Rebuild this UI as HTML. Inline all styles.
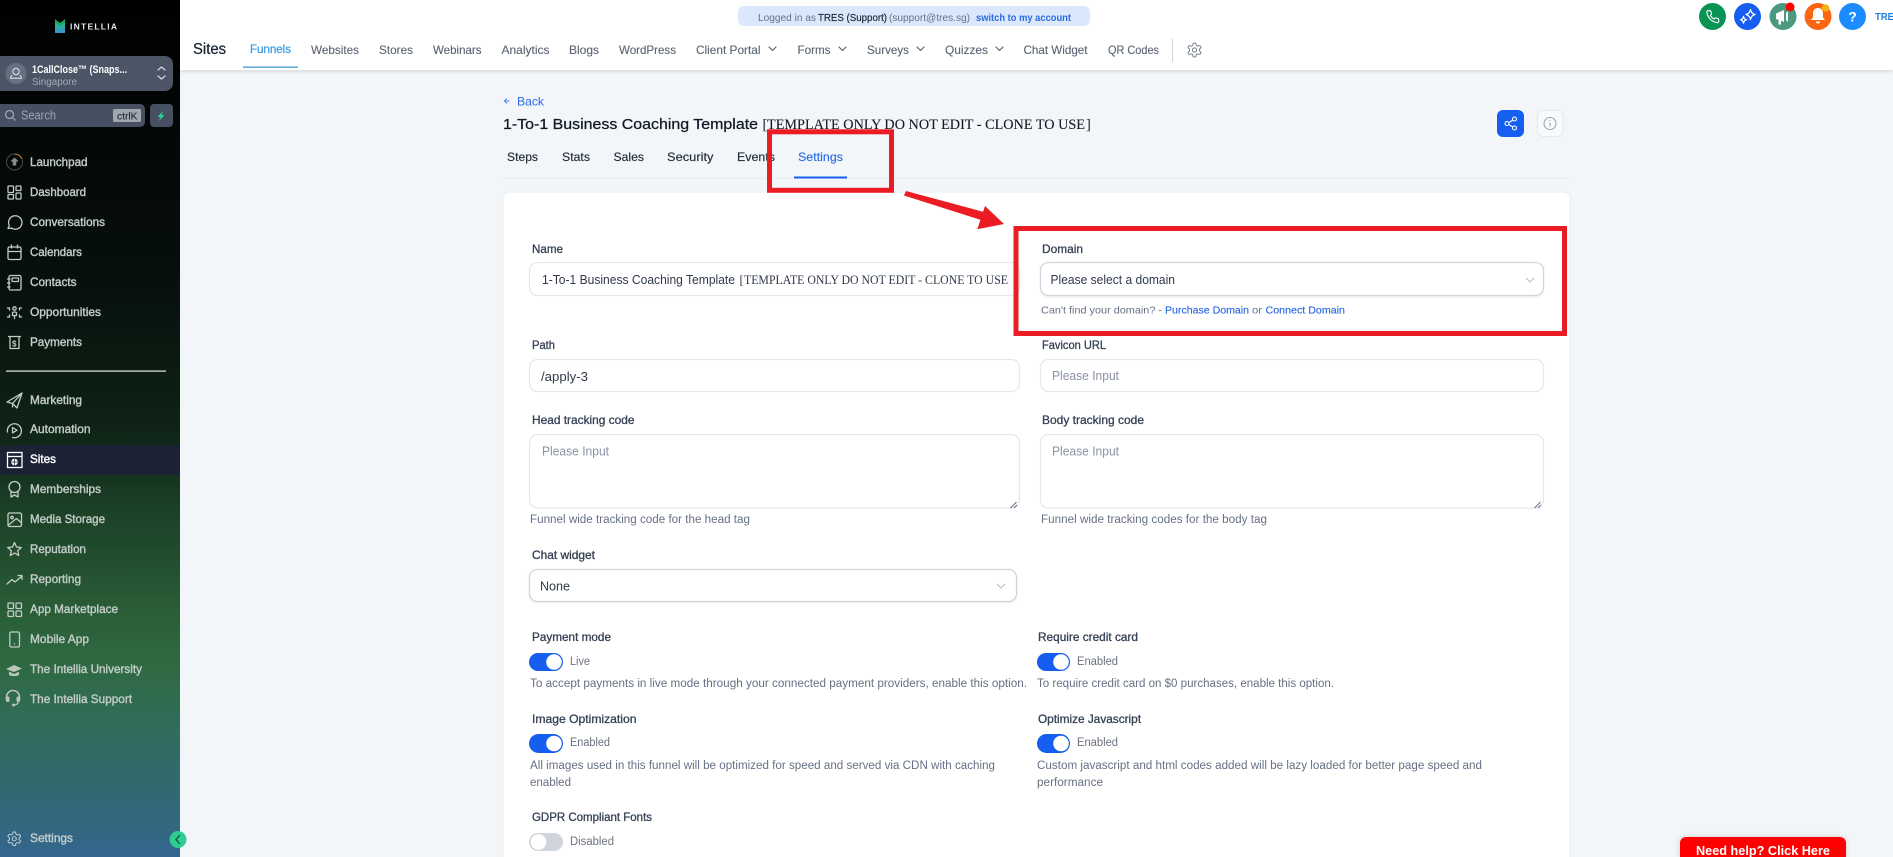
<!DOCTYPE html>
<html lang="en"><head><meta charset="utf-8"><title>Funnel Settings</title>
<style>
html,body{margin:0;padding:0;width:1893px;height:857px;overflow:hidden;background:#f2f6f9}
svg{display:block;font-family:"Liberation Sans",sans-serif}
text{white-space:pre}
.n{font-size:12px;fill:#c3ccc8;stroke:#c3ccc8;stroke-width:.4}
.t{font-size:12px;fill:#5a6472;stroke:#5a6472;stroke-width:.12}
.l{font-size:12px;fill:#344054;stroke:#344054;stroke-width:.3}
.d{font-size:11.5px;fill:#667085}
.p{font-size:12.5px;fill:#8a93a3}
.v{font-size:12.5px;fill:#2f3a4a}
.k{font-size:11.5px;fill:#6b7280}
.s{font-size:12px;fill:#1f2937;stroke:#1f2937;stroke-width:.15}
.i{fill:none;stroke:#c3ccc8;stroke-width:1.3;stroke-linecap:round;stroke-linejoin:round}
.b{fill:#fff;stroke:#e4e7ec;stroke-width:1.2}
.b2{fill:#fff;stroke:#d0d5dd;stroke-width:1.2;filter:drop-shadow(0 1px 1px rgba(16,24,40,.08))}
.c{fill:none;stroke:#b5bcc8;stroke-width:1}
.g{stroke:#667085;stroke-width:1;fill:none}
.serif{font-family:"Liberation Serif",serif}
</style></head><body>
<svg width="1893" height="857" viewBox="0 0 1893 857" xmlns="http://www.w3.org/2000/svg">
<defs>
<linearGradient id="sb" x1="0" y1="0" x2="0" y2="857" gradientUnits="userSpaceOnUse">
<stop offset="0" stop-color="#000"/><stop offset=".33" stop-color="#07100c"/><stop offset=".5" stop-color="#0e2316"/><stop offset=".6" stop-color="#1c4127"/><stop offset=".72" stop-color="#2a5f38"/><stop offset=".78" stop-color="#2f6a43"/><stop offset=".85" stop-color="#316c5c"/><stop offset=".93" stop-color="#326873"/><stop offset="1" stop-color="#34668f"/>
</linearGradient>
<linearGradient id="lg" x1="0" y1="0" x2="0" y2="1"><stop offset="0" stop-color="#27c87a"/><stop offset="1" stop-color="#3b8fcf"/></linearGradient>
<symbol id="gear" viewBox="0 0 24 24"><path d="M12.22 2h-.44a2 2 0 0 0-2 2v.18a2 2 0 0 1-1 1.73l-.43.25a2 2 0 0 1-2 0l-.15-.08a2 2 0 0 0-2.73.73l-.22.38a2 2 0 0 0 .73 2.73l.15.1a2 2 0 0 1 1 1.72v.51a2 2 0 0 1-1 1.74l-.15.09a2 2 0 0 0-.73 2.73l.22.38a2 2 0 0 0 2.73.73l.15-.08a2 2 0 0 1 2 0l.43.25a2 2 0 0 1 1 1.73V20a2 2 0 0 0 2 2h.44a2 2 0 0 0 2-2v-.18a2 2 0 0 1 1-1.73l.43-.25a2 2 0 0 1 2 0l.15.08a2 2 0 0 0 2.73-.73l.22-.39a2 2 0 0 0-.73-2.73l-.15-.08a2 2 0 0 1-1-1.74v-.5a2 2 0 0 1 1-1.74l.15-.09a2 2 0 0 0 .73-2.73l-.22-.38a2 2 0 0 0-2.73-.73l-.15.08a2 2 0 0 1-2 0l-.43-.25a2 2 0 0 1-1-1.73V4a2 2 0 0 0-2-2z"/><circle cx="12" cy="12" r="3"/></symbol>
</defs>

<!-- page -->
<rect width="1893" height="857" fill="#f2f6f9"/>

<!-- header -->
<rect x="180" y="0" width="1713" height="70" fill="#fff" style="filter:drop-shadow(0 1px 2px rgba(16,24,40,.16))"/>
<text x="193" y="54" textLength="33" lengthAdjust="spacingAndGlyphs" font-size="16" fill="#1f2937" stroke="#1f2937" stroke-width=".3">Sites</text>
<text x="250" y="53" textLength="41" lengthAdjust="spacingAndGlyphs" font-size="12" fill="#3b9ae0" stroke="#3b9ae0" stroke-width=".25">Funnels</text>
<rect x="243" y="66.500" width="55" height="1.300" fill="#4299d6"/>
<text class="t" x="311" y="54" textLength="48" lengthAdjust="spacingAndGlyphs">Websites</text>
<text class="t" x="379" y="54" textLength="34" lengthAdjust="spacingAndGlyphs">Stores</text>
<text class="t" x="433" y="54" textLength="48.500" lengthAdjust="spacingAndGlyphs">Webinars</text>
<text class="t" x="501.500" y="54" textLength="48" lengthAdjust="spacingAndGlyphs">Analytics</text>
<text class="t" x="569" y="54" textLength="30" lengthAdjust="spacingAndGlyphs">Blogs</text>
<text class="t" x="619" y="54" textLength="57" lengthAdjust="spacingAndGlyphs">WordPress</text>
<text class="t" x="696" y="54" textLength="64.500" lengthAdjust="spacingAndGlyphs">Client Portal</text>
<text class="t" x="797.500" y="54" textLength="33" lengthAdjust="spacingAndGlyphs">Forms</text>
<text class="t" x="867" y="54" textLength="42" lengthAdjust="spacingAndGlyphs">Surveys</text>
<text class="t" x="945" y="54" textLength="43" lengthAdjust="spacingAndGlyphs">Quizzes</text>
<text class="t" x="1023.500" y="54" textLength="64" lengthAdjust="spacingAndGlyphs">Chat Widget</text>
<text class="t" x="1108" y="54" textLength="51" lengthAdjust="spacingAndGlyphs">QR Codes</text>
<g fill="none" stroke="#5a6472" stroke-width="1.200" stroke-linecap="round" stroke-linejoin="round">
<path d="M769 47l3.500 3.500 3.500-3.500M839 47l3.500 3.500 3.500-3.500M917 47l3.500 3.500 3.500-3.500M996 47l3.500 3.500 3.500-3.500"/>
</g>
<rect x="1172" y="39" width="1" height="23" fill="#cfd4da"/>
<use href="#gear" x="1186" y="41" width="17" height="18" fill="none" stroke="#6b7280" stroke-width="1.300"/>

<!-- logged in pill -->
<rect x="738" y="6" width="352" height="20" rx="6" fill="#dbe8fc"/>
<text x="758" y="21" textLength="58" lengthAdjust="spacingAndGlyphs" font-size="10.500" fill="#667085">Logged in as</text>
<text x="818" y="21" textLength="69" lengthAdjust="spacingAndGlyphs" font-size="10.500" fill="#1f2937" stroke="#1f2937" stroke-width=".2">TRES (Support)</text>
<text x="889" y="21" textLength="81" lengthAdjust="spacingAndGlyphs" font-size="10.500" fill="#667085">(support@tres.sg)</text>
<text x="976" y="21" textLength="95" lengthAdjust="spacingAndGlyphs" font-size="10.500" font-weight="700" fill="#2b6be4">switch to my account</text>

<!-- top right circles -->
<circle cx="1712.500" cy="16.500" r="13.500" fill="#079455"/>
<g transform="translate(1705.500 9.500) scale(.6)" fill="none" stroke="#fff" stroke-width="1.800"><path d="M22 16.920v3a2 2 0 0 1-2.180 2 19.790 19.790 0 0 1-8.630-3.070 19.500 19.500 0 0 1-6-6 19.790 19.790 0 0 1-3.070-8.670A2 2 0 0 1 4.110 2h3a2 2 0 0 1 2 1.720 12.840 12.840 0 0 0 .7 2.810 2 2 0 0 1-.45 2.110L8.090 9.910a16 16 0 0 0 6 6l1.270-1.270a2 2 0 0 1 2.110-.45 12.840 12.840 0 0 0 2.810.7A2 2 0 0 1 22 16.920z"/></g>
<circle cx="1747.500" cy="16.500" r="13.500" fill="#155eef"/>
<g fill="none" stroke="#fff" stroke-width="1.300" stroke-linejoin="round"><path d="M1750.500 9.500c.6 3 1.900 4.400 4.500 5-2.600.6-3.900 2-4.500 5-.6-3-1.900-4.400-4.500-5 2.600-.6 3.900-2 4.500-5z"/><path d="M1743.500 16.500c.4 2 1.200 2.900 3 3.300-1.800.4-2.600 1.300-3 3.300-.4-2-1.200-2.900-3-3.300 1.800-.4 2.600-1.300 3-3.300z"/></g>
<circle cx="1783" cy="16.500" r="13.500" fill="#4a9a80"/>
<path d="M1776 13.500l8-3.500v12l-3-1.300v3.800h-2.500v-4.700l-2.500-.8zM1786 13l2-2v11l-2-2z" fill="#fff"/>
<circle cx="1790" cy="7" r="4.500" fill="#f00"/>
<circle cx="1818" cy="16.500" r="13.500" fill="#fb6514"/>
<path d="M1818 8c-3 0-5 2.300-5 5.500v4l-2 2.500h14l-2-2.500v-4c0-3.200-2-5.500-5-5.500z" fill="#fff"/><path d="M1816 21.500a2 2 0 0 0 4 0z" fill="#fff"/>
<circle cx="1825.500" cy="8" r="3.800" fill="#f5b016"/>
<circle cx="1852.500" cy="16.500" r="13.500" fill="#1a8cff"/>
<text x="1852.500" y="21.500" text-anchor="middle" font-size="14" font-weight="700" fill="#fff">?</text>
<text x="1875" y="20" textLength="19" lengthAdjust="spacingAndGlyphs" font-size="10.500" font-weight="700" fill="#1f7fdc">TRE</text>

<!-- sidebar -->
<rect x="0" y="0" width="180" height="857" fill="url(#sb)"/>
<path d="M55 19.500l5 3.500 5-3.500V33H55z" fill="url(#lg)"/>
<path d="M55 19l5 4.500 5-4.500v3.500l-5 4-5-4z" fill="#19a85f"/>
<text x="70" y="29.500" textLength="47" font-size="8.500" font-weight="700" fill="#e5e7eb">INTELLIA</text>

<rect x="-8" y="56" width="181" height="35" rx="8" fill="#4b5566"/>
<circle cx="16" cy="73.500" r="10.500" fill="#667080"/>
<g fill="none" stroke="#e5e7eb" stroke-width="1"><circle cx="16" cy="71.500" r="3.200"/><path d="M12 75c-1 1.500-1.500 2.300-1.500 3.300h11c0-1-.5-1.800-1.500-3.300"/></g>
<text x="32" y="73" textLength="95" lengthAdjust="spacingAndGlyphs" font-size="11" font-weight="700" fill="#fff">1CallClose™ (Snaps...</text>
<text x="32" y="85" textLength="45" lengthAdjust="spacingAndGlyphs" font-size="10.500" fill="#a3abb8">Singapore</text>
<path d="M158 70l3.500-3 3.500 3M158 76l3.500 3 3.500-3" fill="none" stroke="#d1d5db" stroke-width="1.300" stroke-linecap="round" stroke-linejoin="round"/>

<rect x="-8" y="104" width="153" height="23" rx="5" fill="#475063"/>
<g fill="none" stroke="#a3abb8" stroke-width="1.200"><circle cx="9.500" cy="114.500" r="4"/><path d="M12.500 117.500l3 3"/></g>
<text x="21" y="119.500" textLength="35" lengthAdjust="spacingAndGlyphs" font-size="12.500" fill="#9aa3b2">Search</text>
<rect x="113" y="109" width="28" height="13" rx="1.500" fill="#a0a6b0"/>
<text x="117" y="119.500" textLength="20.500" lengthAdjust="spacingAndGlyphs" font-size="10.500" fill="#111827">ctrlK</text>
<rect x="150" y="104" width="23" height="23" rx="4" fill="#475063"/>
<path d="M163.500 110.500l-6 6.500h3l-2 4.500 6-6.500h-3z" fill="#2fd18f"/>

<!-- nav text -->
<text class="n" x="30" y="166" textLength="57.500" lengthAdjust="spacingAndGlyphs">Launchpad</text>
<text class="n" x="30" y="196" textLength="56" lengthAdjust="spacingAndGlyphs">Dashboard</text>
<text class="n" x="30" y="226" textLength="75" lengthAdjust="spacingAndGlyphs">Conversations</text>
<text class="n" x="30" y="256" textLength="52" lengthAdjust="spacingAndGlyphs">Calendars</text>
<text class="n" x="30" y="286" textLength="46.500" lengthAdjust="spacingAndGlyphs">Contacts</text>
<text class="n" x="30" y="316" textLength="71" lengthAdjust="spacingAndGlyphs">Opportunities</text>
<text class="n" x="30" y="346" textLength="52" lengthAdjust="spacingAndGlyphs">Payments</text>
<rect x="6" y="370.500" width="160" height="1.200" fill="#e5e7eb"/>
<text class="n" x="30" y="404" textLength="52" lengthAdjust="spacingAndGlyphs">Marketing</text>
<text class="n" x="30" y="433" textLength="60.500" lengthAdjust="spacingAndGlyphs">Automation</text>
<rect x="0" y="445" width="180" height="30" rx="4" fill="#1a2233"/>
<text x="30" y="463" textLength="26" lengthAdjust="spacingAndGlyphs" font-size="12" fill="#fff" stroke="#fff" stroke-width=".4">Sites</text>
<text class="n" x="30" y="493" textLength="71" lengthAdjust="spacingAndGlyphs">Memberships</text>
<text class="n" x="30" y="523" textLength="75" lengthAdjust="spacingAndGlyphs">Media Storage</text>
<text class="n" x="30" y="553" textLength="56" lengthAdjust="spacingAndGlyphs">Reputation</text>
<text class="n" x="30" y="583" textLength="51" lengthAdjust="spacingAndGlyphs">Reporting</text>
<text class="n" x="30" y="613" textLength="88" lengthAdjust="spacingAndGlyphs">App Marketplace</text>
<text class="n" x="30" y="643" textLength="59" lengthAdjust="spacingAndGlyphs">Mobile App</text>
<text class="n" x="30" y="673" textLength="112" lengthAdjust="spacingAndGlyphs">The Intellia University</text>
<text class="n" x="30" y="703" textLength="102" lengthAdjust="spacingAndGlyphs">The Intellia Support</text>
<text class="n" x="30" y="842" textLength="43" lengthAdjust="spacingAndGlyphs">Settings</text>

<!-- nav icons -->
<circle cx="14.500" cy="162" r="8" fill="none" stroke="#4a4a48" stroke-width="1"/>
<path d="M14.500 154a8 8 0 0 1 7.300 4.800" fill="none" stroke="#d9822b" stroke-width="1"/>
<path d="M14.500 157.500l-4.200 4h2.400v4h3.600v-4h2.400z" fill="#8b8f8c"/>
<g class="i">
<rect x="8" y="186" width="5.500" height="6.500" rx=".8"/><rect x="16" y="186" width="5" height="4.500" rx=".8"/><rect x="8" y="194.500" width="5.500" height="4.500" rx=".8"/><rect x="16" y="193" width="5" height="6" rx=".8"/>
<path d="M8 228.500l1.300-3a6.700 6.700 0 1 1 2.500 2.700z"/>
<rect x="8" y="247" width="13" height="12.500" rx="1.500"/><path d="M8 251.500h13M11.500 245v3M17.500 245v3"/>
<rect x="9" y="275.500" width="12" height="14.500" rx="1.500"/><rect x="12" y="278" width="6.500" height="3.500" rx=".5"/><path d="M7.500 279h2.500M7.500 283h2.500M7.500 287h2.500"/>
<circle cx="14.500" cy="308.500" r="1.700"/><path d="M12.500 313c0-1.300 4-1.300 4 0v2.500h-4zM7.500 308h2v2M21.500 308h-2v2M7.500 317h2v-2M21.500 317h-2v-2M14.500 316v2.500"/>
<path d="M8.500 336.500h12M10 337v11.500h9V337"/>
<path d="M7 402l15-9-5 15-4.500-4.500zM12.500 403.500v3.500M22 393l-9.500 10.500"/>
<path d="M7.500 432a7 7 0 1 1 5 5.500"/><path d="M12.500 427.500l4.500 2.700-4.500 2.700z"/>
<path d="M9 487a5.500 5.500 0 1 1 11 0 5.500 5.500 0 1 1-11 0zM11 491.500v5.500l3.500-2 3.500 2v-5.500"/>
<rect x="8" y="513" width="13.500" height="13.500" rx="1.500"/><circle cx="12" cy="517.500" r="1.200"/><path d="M8.500 525l8-6.500 5 4.500"/>
<path d="M14.500 542.500l2 4.500 4.800.5-3.600 3.200 1 4.800-4.200-2.500-4.200 2.500 1-4.800-3.600-3.200 4.800-.5z"/>
<path d="M7 584l5-4.500 3 2.500 7-6M18 575.500h4v4"/>
<rect x="8" y="603" width="5.500" height="5.500" rx="1"/><rect x="16" y="603" width="5.500" height="5.500" rx="1"/><rect x="8" y="611" width="5.500" height="5.500" rx="1"/><rect x="16" y="611" width="5.500" height="5.500" rx="1"/>
<rect x="9.800" y="632" width="9.700" height="15" rx="1.500"/>
</g>
<text x="12" y="346.500" font-size="8" font-weight="700" fill="#c3ccc8">$</text>
<circle cx="14.500" cy="644" r=".7" fill="#c3ccc8"/>
<g fill="none" stroke="#fff" stroke-width="1.300"><rect x="7.500" y="452.500" width="14.500" height="15"/><path d="M7.500 456.500h14.500"/></g>
<circle cx="14.500" cy="462" r="3.300" fill="#fff"/><path d="M11.500 462h6M14.500 459v6" stroke="#1a2233" stroke-width=".7"/>
<path d="M6 669l8-4 8 3.500-8 3.500zM9 671.500v3.500c3 1.500 7 1.500 10 0v-3.200l-5 2.200z" fill="#b9c6bc"/>
<path d="M6.500 700v-3a6.500 6.500 0 0 1 13 0v3" fill="none" stroke="#b9c6bc" stroke-width="1.600"/><rect x="6" y="696.500" width="3.500" height="5.500" rx="1.500" fill="#b9c6bc"/><rect x="16.500" y="696.500" width="3.500" height="5.500" rx="1.500" fill="#b9c6bc"/><path d="M18 702c0 2-2 3-4.500 3" fill="none" stroke="#b9c6bc" stroke-width="1.300"/><circle cx="13.500" cy="705" r="1.500" fill="#b9c6bc"/>
<use href="#gear" x="6" y="830.500" width="16.500" height="16.500" fill="none" stroke="#c3d0d6" stroke-width="1.400"/>
<circle cx="178" cy="839.500" r="8.500" fill="#2ecc8f"/>
<path d="M179.500 835.500l-3.500 4 3.500 4" fill="none" stroke="#134e4a" stroke-width="1.300" stroke-linecap="round"/>

<!-- top content -->
<path d="M509.500 101h-5M507 98.500l-2.500 2.500 2.500 2.500" fill="none" stroke="#4d86ea" stroke-width="1"/>
<text x="517" y="105.500" textLength="27" lengthAdjust="spacingAndGlyphs" font-size="12" fill="#2b6be4">Back</text>
<text x="503" y="129" textLength="255" lengthAdjust="spacingAndGlyphs" font-size="14.500" fill="#111827" stroke="#111827" stroke-width=".25">1-To-1 Business Coaching Template</text>
<text class="serif" x="762.500" y="129" font-size="14.500" fill="#111827">[</text>
<text class="serif" x="767" y="129" textLength="318" lengthAdjust="spacingAndGlyphs" font-size="14.500" fill="#111827" stroke="#111827" stroke-width=".1">TEMPLATE ONLY DO NOT EDIT - CLONE TO USE</text>
<text class="serif" x="1086" y="129" font-size="14.500" fill="#111827">]</text>

<text class="s" x="507" y="161" textLength="31" lengthAdjust="spacingAndGlyphs">Steps</text>
<text class="s" x="562" y="161" textLength="28" lengthAdjust="spacingAndGlyphs">Stats</text>
<text class="s" x="613.500" y="161" textLength="30.500" lengthAdjust="spacingAndGlyphs">Sales</text>
<text class="s" x="667" y="161" textLength="46.500" lengthAdjust="spacingAndGlyphs">Security</text>
<text class="s" x="737" y="161" textLength="38" lengthAdjust="spacingAndGlyphs">Events</text>
<text x="798" y="161" textLength="45" lengthAdjust="spacingAndGlyphs" font-size="12" fill="#2b6be4" stroke="#2b6be4" stroke-width=".15">Settings</text>
<rect x="503" y="177.500" width="1067" height="1" fill="#e8ecf0"/>
<rect x="794" y="176.500" width="53" height="2" fill="#155eef"/>

<rect x="1497" y="110" width="27" height="27" rx="6" fill="#155eef"/>
<g fill="none" stroke="#fff" stroke-width="1.100"><circle cx="1514.500" cy="119" r="2"/><circle cx="1507" cy="123.500" r="2"/><circle cx="1514.500" cy="128" r="2"/><path d="M1509 122.500l3.800-2.400M1509 124.700l3.800 2.300"/></g>
<rect x="1537.500" y="110.500" width="25.500" height="26" rx="6" fill="#f9fafb" stroke="#e5e7eb"/>
<circle cx="1550" cy="123.500" r="6" fill="none" stroke="#9aa1ad" stroke-width="1"/><path d="M1550 122.500v4M1550 120v1" stroke="#9aa1ad" stroke-width="1"/>

<!-- card -->
<rect x="503" y="192" width="1067" height="680" rx="6" fill="#fff" stroke="#e9edf1"/>

<!-- name -->
<text class="l" x="532" y="253" textLength="31" lengthAdjust="spacingAndGlyphs">Name</text>
<rect class="b" x="529.500" y="262.500" width="490" height="33" rx="8"/>
<text x="542" y="284" textLength="193" lengthAdjust="spacingAndGlyphs" font-size="12.500" fill="#2f3a4a">1-To-1 Business Coaching Template</text>
<text class="serif" x="739.500" y="284" font-size="12.500" fill="#2f3a4a">[</text>
<text class="serif" x="744" y="284" textLength="264" lengthAdjust="spacingAndGlyphs" font-size="12.500" fill="#2f3a4a">TEMPLATE ONLY DO NOT EDIT - CLONE TO USE</text>

<!-- domain -->
<text class="l" x="1042" y="253" textLength="41" lengthAdjust="spacingAndGlyphs">Domain</text>
<rect class="b2" x="1040.500" y="262.500" width="503" height="33" rx="8"/>
<text x="1050.500" y="284" textLength="124.500" lengthAdjust="spacingAndGlyphs" font-size="12.500" fill="#2f3a4a">Please select a domain</text>
<path d="M1526 278l4 4 4-4" class="c"/>
<text x="1041" y="313.500" textLength="121" lengthAdjust="spacingAndGlyphs" font-size="10.500" fill="#667085">Can't find your domain? -</text>
<text x="1165" y="313.500" textLength="84" lengthAdjust="spacingAndGlyphs" font-size="10.500" fill="#2b6be4" stroke="#2b6be4" stroke-width=".15">Purchase Domain</text>
<text x="1252" y="313.500" textLength="10" lengthAdjust="spacingAndGlyphs" font-size="10.500" fill="#667085">or</text>
<text x="1265.500" y="313.500" textLength="79.500" lengthAdjust="spacingAndGlyphs" font-size="10.500" fill="#2b6be4" stroke="#2b6be4" stroke-width=".15">Connect Domain</text>

<!-- path / favicon -->
<text class="l" x="532" y="349" textLength="23" lengthAdjust="spacingAndGlyphs">Path</text>
<rect class="b" x="529.500" y="359.500" width="490" height="32" rx="8"/>
<text class="v" x="541" y="381" textLength="47" lengthAdjust="spacingAndGlyphs">/apply-3</text>
<text class="l" x="1042" y="349" textLength="64" lengthAdjust="spacingAndGlyphs">Favicon URL</text>
<rect class="b" x="1040.500" y="359.500" width="503" height="32" rx="8"/>
<text class="p" x="1052" y="380" textLength="67" lengthAdjust="spacingAndGlyphs">Please Input</text>

<!-- tracking -->
<text class="l" x="532" y="424" textLength="102.500" lengthAdjust="spacingAndGlyphs">Head tracking code</text>
<rect class="b" x="529.500" y="434.500" width="490" height="73.500" rx="8"/>
<text class="p" x="542" y="455.500" textLength="67" lengthAdjust="spacingAndGlyphs">Please Input</text>
<path class="g" d="M1010.500 508l6-6M1014 508l3-3"/>
<text class="d" x="530" y="523" textLength="220" lengthAdjust="spacingAndGlyphs">Funnel wide tracking code for the head tag</text>
<text class="l" x="1042" y="424" textLength="102" lengthAdjust="spacingAndGlyphs">Body tracking code</text>
<rect class="b" x="1040.500" y="434.500" width="503" height="73.500" rx="8"/>
<text class="p" x="1052" y="455.500" textLength="67" lengthAdjust="spacingAndGlyphs">Please Input</text>
<path class="g" d="M1534.500 508l6-6M1538 508l3-3"/>
<text class="d" x="1041" y="523" textLength="226" lengthAdjust="spacingAndGlyphs">Funnel wide tracking codes for the body tag</text>

<!-- chat widget -->
<text class="l" x="532" y="559" textLength="63" lengthAdjust="spacingAndGlyphs">Chat widget</text>
<rect class="b2" x="529.500" y="569.500" width="487" height="32" rx="8"/>
<text class="v" x="540" y="590.500" textLength="30" lengthAdjust="spacingAndGlyphs">None</text>
<path d="M997 584l4 4 4-4" class="c"/>

<!-- payment / credit -->
<text class="l" x="532" y="641" textLength="79" lengthAdjust="spacingAndGlyphs">Payment mode</text>
<rect x="529" y="653" width="34" height="18" rx="9" fill="#155eef"/><circle cx="554" cy="662" r="7.800" fill="#fff"/>
<text class="k" x="570" y="665" textLength="20" lengthAdjust="spacingAndGlyphs">Live</text>
<text class="d" x="530" y="687" textLength="497" lengthAdjust="spacingAndGlyphs">To accept payments in live mode through your connected payment providers, enable this option.</text>
<text class="l" x="1038" y="641" textLength="100" lengthAdjust="spacingAndGlyphs">Require credit card</text>
<rect x="1037" y="653" width="33" height="18" rx="9" fill="#155eef"/><circle cx="1061" cy="662" r="7.800" fill="#fff"/>
<text class="k" x="1077" y="665" textLength="41" lengthAdjust="spacingAndGlyphs">Enabled</text>
<text class="d" x="1037" y="687" textLength="297" lengthAdjust="spacingAndGlyphs">To require credit card on $0 purchases, enable this option.</text>

<!-- image / js -->
<text class="l" x="532" y="723" textLength="104.500" lengthAdjust="spacingAndGlyphs">Image Optimization</text>
<rect x="529" y="734" width="34" height="19" rx="9.500" fill="#155eef"/><circle cx="554" cy="743.500" r="7.800" fill="#fff"/>
<text class="k" x="570" y="746" textLength="40" lengthAdjust="spacingAndGlyphs">Enabled</text>
<text class="d" x="530" y="769" textLength="465" lengthAdjust="spacingAndGlyphs">All images used in this funnel will be optimized for speed and served via CDN with caching</text>
<text class="d" x="530" y="786" textLength="41" lengthAdjust="spacingAndGlyphs">enabled</text>
<text class="l" x="1038" y="723" textLength="103" lengthAdjust="spacingAndGlyphs">Optimize Javascript</text>
<rect x="1037" y="734" width="33" height="19" rx="9.500" fill="#155eef"/><circle cx="1061" cy="743.500" r="7.800" fill="#fff"/>
<text class="k" x="1077" y="746" textLength="41" lengthAdjust="spacingAndGlyphs">Enabled</text>
<text class="d" x="1037" y="769" textLength="445" lengthAdjust="spacingAndGlyphs">Custom javascript and html codes added will be lazy loaded for better page speed and</text>
<text class="d" x="1037" y="786" textLength="66" lengthAdjust="spacingAndGlyphs">performance</text>

<!-- gdpr -->
<text class="l" x="532" y="821" textLength="120" lengthAdjust="spacingAndGlyphs">GDPR Compliant Fonts</text>
<rect x="529" y="833" width="34" height="18" rx="9" fill="#d0d5dd"/><circle cx="538.500" cy="842" r="7.800" fill="#fff"/>
<text class="k" x="570" y="845" textLength="44" lengthAdjust="spacingAndGlyphs">Disabled</text>

<!-- need help -->
<path d="M1680 857v-14a6 6 0 0 1 6-6h154a6 6 0 0 1 6 6v14z" fill="#f00" style="filter:drop-shadow(0 0 3px rgba(0,0,0,.15))"/>
<text x="1696" y="855" textLength="134" lengthAdjust="spacingAndGlyphs" font-size="13" font-weight="700" fill="#fff">Need help? Click Here</text>

<!-- red annotations -->
<g fill="none" stroke="#ec1c24">
<rect x="769.500" y="131.800" width="122" height="58.500" stroke-width="5"/>
<rect x="1016" y="228.500" width="548.500" height="105" stroke-width="5"/>
</g>
<path d="M906 191l78 21-3 8-77-24.500z" fill="#ec1c24"/>
<path d="M985 206l19 18-26.700 5.300z" fill="#ec1c24"/>
</svg>
</body></html>
